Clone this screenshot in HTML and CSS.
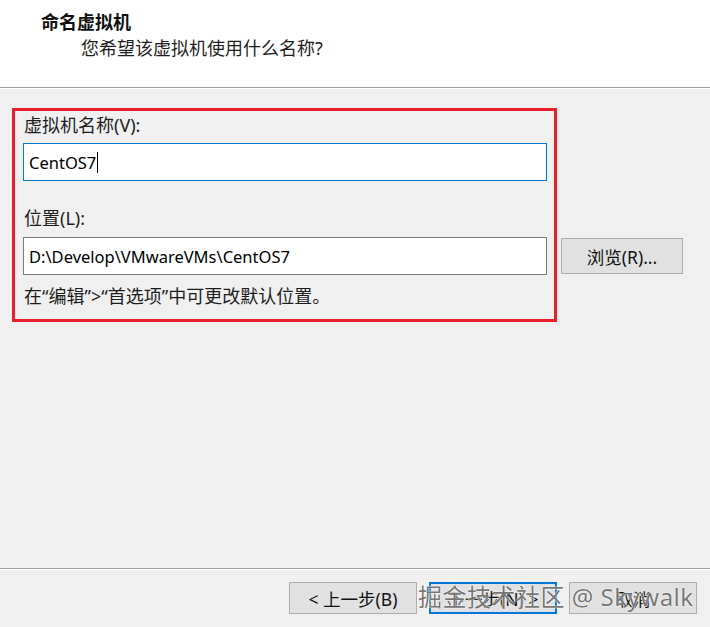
FILE: index.html
```html
<!DOCTYPE html>
<html lang="zh-CN">
<head>
    <meta charset="UTF-8">
    <meta name="viewport" content="width=device-width, initial-scale=1.0">
    <title>新建虚拟机向导</title>
    <link rel="stylesheet" href="styles.css">
</head>
<body>

    <!-- Wizard header -->
    <div class="header">
        <div class="title">命名虚拟机</div>
        <div class="subtitle">您希望该虚拟机使用什么名称?</div>
    </div>

    <!-- Name and location -->
    <div class="content">
        <div class="group">
            <label class="label" for="vm-name">虚拟机名称(V):</label>
            <div class="field focused"><span id="vm-name">CentOS7</span><span class="caret"></span></div>

            <label class="label second" for="vm-path">位置(L):</label>
            <div class="field"><span id="vm-path">D:\Develop\VMwareVMs\CentOS7</span></div>

            <p class="hint">在“编辑”&gt;“首选项”中可更改默认位置。</p>
        </div>
        <button class="btn browse">浏览(R)...</button>
    </div>

    <!-- Navigation buttons -->
    <div class="footer">
        <button class="btn nav">&lt; 上一步(B)</button>
        <button class="btn nav default">下一步(N) &gt;</button>
        <button class="btn nav">取消</button>
        <div class="watermark">掘金技术社区 @ Skywalk</div>
    </div>

</body>
</html>
```

FILE: styles.css
```css
html, body {
    height: 100%;
}
body {
    margin: 0;
    display: flex;
    flex-direction: column;
    background: #f0f0f0;
    color: #1e1e1e;
    font-family: "Noto Sans", "Noto Sans CJK SC", sans-serif;
    font-size: 18px;
}
.header {
    height: 88px;
    background: #fff;
    border-bottom: 1px solid #a0a0a0;
    box-shadow: 0 1px 0 #fff;
    box-sizing: border-box;
    padding-top: 10px;
}
.title {
    padding-left: 41px;
    font-weight: bold;
    line-height: 24px;
    color: #111;
}
.subtitle {
    padding-left: 81px;
    margin-top: 2px;
    line-height: 24px;
}
.content {
    flex: 1;
    display: flex;
    align-items: flex-start;
    padding: 20px 0 0 12px;
}
.group {
    width: 545px;
    box-sizing: border-box;
    border: 3px solid #e8202c;
    padding: 3px 7px 12px 8px;
}
.label {
    display: block;
    padding-left: 1px;
    line-height: 22px;
}
.label.second {
    margin-top: 26px;
}
.field {
    height: 38px;
    box-sizing: border-box;
    margin-top: 7px;
    border: 1px solid #7a7a7a;
    background: #fff;
    padding-left: 5px;
    display: flex;
    align-items: center;
    color: #000;
    font-size: 16.5px;
}
.label.second + .field {
    margin-top: 8px;
}
.field.focused {
    border-color: #0078d7;
}
.caret {
    width: 1px;
    height: 21px;
    background: #000;
    margin-left: 1px;
}
.hint {
    margin: 10px 0 0 1px;
    line-height: 22px;
}
.btn {
    font: inherit;
    font-size: 17.5px;
    color: #111;
    background: #e1e1e1;
    border: 1px solid #adadad;
    padding: 0;
    box-sizing: border-box;
}
.browse {
    width: 122px;
    height: 36px;
    margin: 130px 0 0 4px;
}
.footer {
    position: relative;
    height: 59px;
    box-sizing: border-box;
    border-top: 1px solid #a0a0a0;
    box-shadow: inset 0 1px 0 #fff;
    display: flex;
    justify-content: flex-end;
    gap: 12px;
    padding: 13px 13px 0 0;
}
.nav {
    width: 128px;
    height: 32px;
}
.nav.default {
    border: 2px solid #0078d7;
}
.watermark {
    position: absolute;
    left: 418px;
    top: 12px;
    font-size: 24px;
    line-height: 32px;
    letter-spacing: 0.5px;
    color: rgba(80, 80, 80, 0.78);
    text-shadow: 0 0 2px #fff, 0 0 1px #fff;
    white-space: nowrap;
}
```
